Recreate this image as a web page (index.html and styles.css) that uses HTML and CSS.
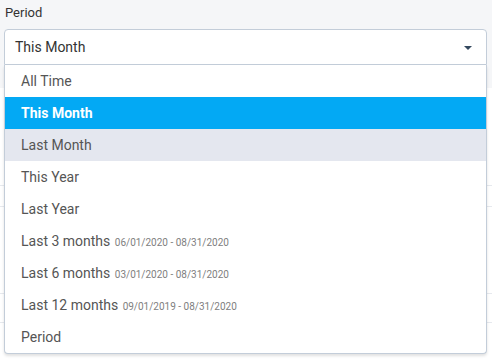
FILE: index.html
```html
<!DOCTYPE html>
<html>
<head>
<meta charset="utf-8">
<link rel="stylesheet" href="styles.css">
</head>
<body>
<div class="page">
  <div class="filter">
    <label class="label">Period</label>
    <div class="select-wrap">
      <div class="select">
        <span class="value">This Month</span>
        <span class="caret"></span>
      </div>
      <ul class="menu">
        <li class="item">All Time</li>
        <li class="item selected">This Month</li>
        <li class="item hover">Last Month</li>
        <li class="item">This Year</li>
        <li class="item">Last Year</li>
        <li class="item">Last 3 months <span class="range">06/01/2020 - 08/31/2020</span></li>
        <li class="item">Last 6 months <span class="range">03/01/2020 - 08/31/2020</span></li>
        <li class="item">Last 12 months <span class="range">09/01/2019 - 08/31/2020</span></li>
        <li class="item">Period</li>
      </ul>
    </div>
  </div>
  <div class="content">
    <div class="row r1"></div>
    <div class="row r2"></div>
    <div class="row r3"></div>
    <div class="row r4"></div>
  </div>
</div>
</body>
</html>
```

FILE: styles.css
```css
html, body {
  margin: 0;
  padding: 0;
  background: #ffffff;
  font-family: Roboto, "Liberation Sans", sans-serif;
}
.page {
  width: 492px;
  height: 359px;
  overflow: hidden;
}
.filter {
  background: #f5f6f8;
  height: 88px;
  box-sizing: border-box;
  padding: 3px 5px 0 4px;
}
.label {
  display: block;
  font-size: 13px;
  line-height: 20px;
  color: #333333;
  padding-left: 1px;
  margin-bottom: 6px;
}
.select-wrap {
  position: relative;
  width: 483px;
}
.select {
  height: 36px;
  box-sizing: border-box;
  border: 1px solid #c3cdd9;
  border-radius: 4px 4px 0 0;
  background: #ffffff;
  display: flex;
  align-items: center;
  justify-content: space-between;
  padding: 0 14px 0 10px;
}
.value {
  font-size: 14px;
  color: #333333;
}
.caret {
  width: 0;
  height: 0;
  border-left: 4px solid transparent;
  border-right: 4px solid transparent;
  border-top: 4px solid #34495e;
  margin-top: 1px;
}
.menu {
  position: absolute;
  top: 36px;
  left: 0;
  width: 483px;
  box-sizing: border-box;
  margin: 0;
  padding: 0;
  list-style: none;
  background: #ffffff;
  border: 1px solid #c3cdd9;
  border-top: none;
  border-radius: 0 0 4px 4px;
  box-shadow: 0 2px 3px rgba(0, 0, 0, 0.12);
  z-index: 2;
}
.item {
  height: 32px;
  line-height: 32px;
  padding-left: 16px;
  font-size: 14px;
  color: #555555;
  white-space: nowrap;
}
.item.selected {
  background: #03a9f4;
  color: #ffffff;
  font-weight: 700;
}
.item.hover {
  background: #e4e7ef;
}
.range {
  font-size: 10px;
  color: #808080;
  margin-left: 1px;
}
.content {
  background: #ffffff;
}
.row {
  border-bottom: 1px solid #e6e9ee;
}
.r1 { height: 97px; }
.r2 { height: 20px; }
.r3 { height: 86px; }
.r4 { height: 28px; }
```
